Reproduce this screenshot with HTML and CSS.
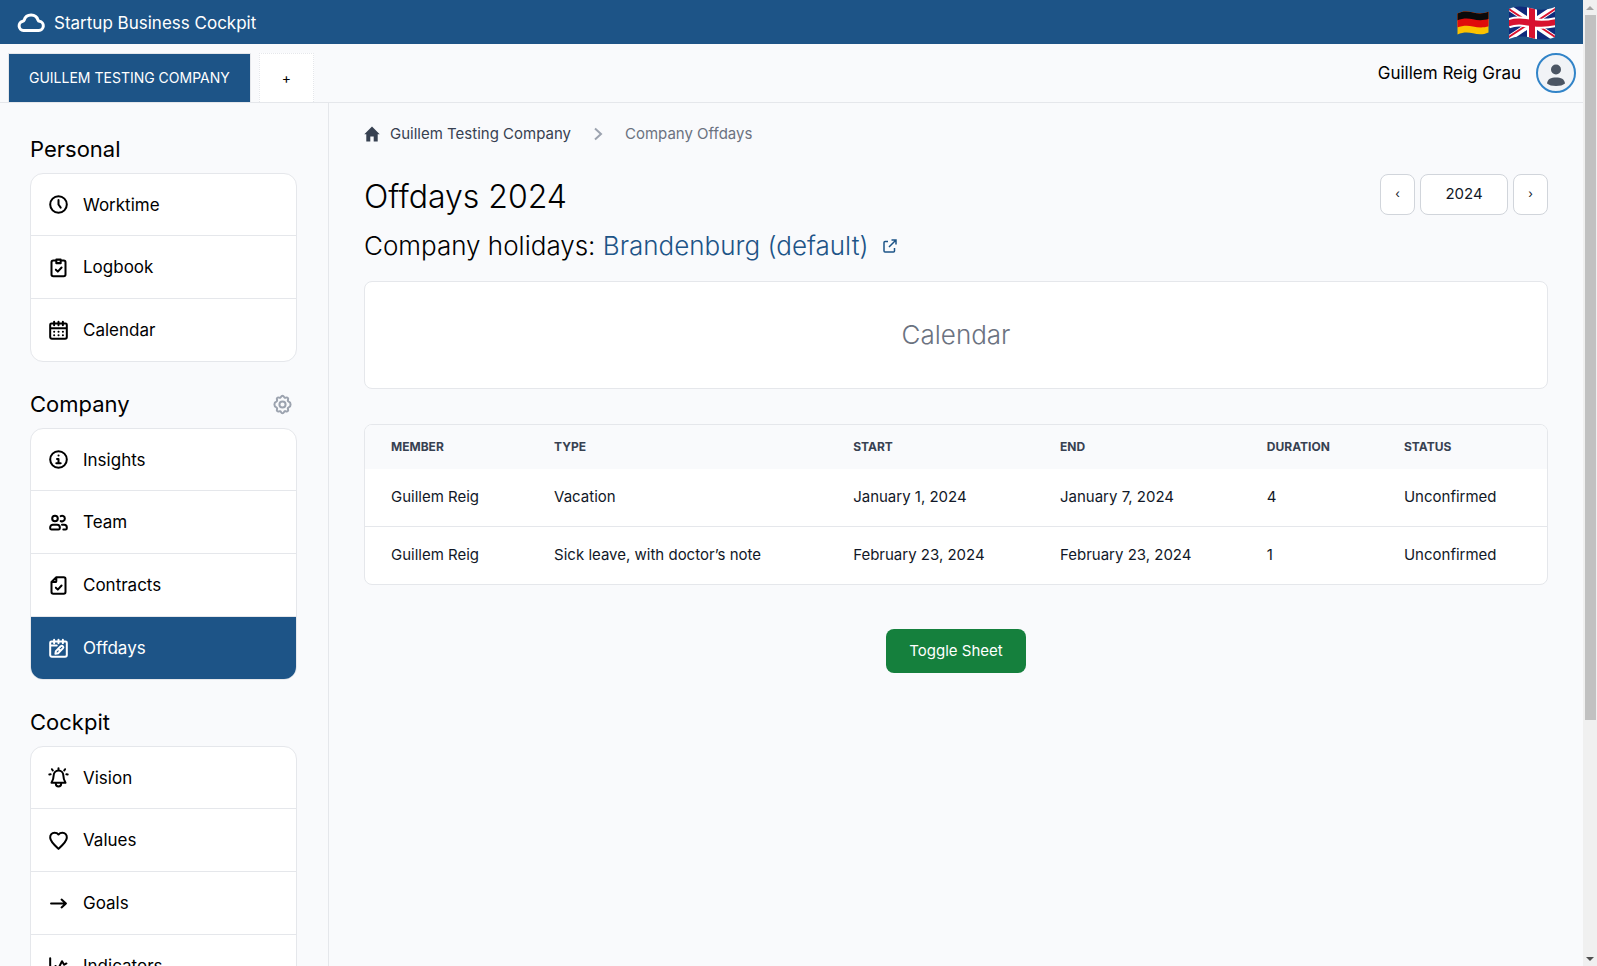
FILE: index.html
```html
<!DOCTYPE html>
<html lang="en">
<head>
<meta charset="utf-8">
<meta name="viewport" content="width=device-width, initial-scale=1">
<title>Startup Business Cockpit</title>
<link rel="stylesheet" href="styles.css">
</head>
<body>
<div class="app">
  <header class="topbar">
    <a class="brand" href="#">
      <svg class="brand-icon" viewBox="0 0 28 20" fill="none" stroke="currentColor" stroke-width="3" stroke-linejoin="round"><path d="M6.500 17.500h15.300a4.600 4.600 0 0 0 .6-9.150 1.500 1.500 0 0 1-1.300-1A7.300 7.300 0 0 0 7.100 7.200a1.500 1.500 0 0 1-1.200 1A4.700 4.700 0 0 0 6.500 17.500z"/></svg>
      <span>Startup Business Cockpit</span>
    </a>
    <div class="languages">
      <button class="flag" type="button" aria-label="Deutsch">
        <svg class="flag-de" viewBox="0 0 32 24">
          <defs><clipPath id="wave-de"><path d="M0.500 2.500C6-.5 11 .2 16 1.500S26 3 31.500.8V21.500C26 24 21 23.500 16 22.300S6 21 .5 23.500z"/></clipPath></defs>
          <g clip-path="url(#wave-de)"><path fill="#fcc200" d="M0 0h32v24H0z"/><path fill="#e00b0b" d="M0 0h32v15.200C26 17 21 16.500 16 15.400S6 14.200 0 16.500z"/><path fill="#0a0a0a" d="M0 0h32v7.800C26 9.800 21 9.500 16 8.300S6 7 0 9.500z"/></g>
        </svg>
      </button>
      <button class="flag" type="button" aria-label="English">
        <svg class="flag-uk" viewBox="0 0 48 34">
          <defs><clipPath id="wave-uk"><path d="M1 3C9-.8 16 .5 24 2.500S39 4 47 1V31c-8 3.500-15 3-23 1S9 29.500 1 33z"/></clipPath></defs>
          <g clip-path="url(#wave-uk)">
            <path fill="#0f2a7c" d="M0 0h48v34H0z"/>
            <path stroke="#fff" stroke-width="6" d="M0 1l48 32M0 33L48 1"/>
            <path stroke="#d8112f" stroke-width="2" d="M0 2.500l22 14.500M26 17l22 14.500M0 31.500L22 17M26 17L48 2.500"/>
            <path stroke="#fff" stroke-width="10" d="M24 0v34"/><path fill="none" stroke="#fff" stroke-width="10" d="M0 17.500c8-3 15-2 24-.5s16 1 24-1"/>
            <path stroke="#d8112f" stroke-width="6" d="M24 0v34"/><path fill="none" stroke="#d8112f" stroke-width="6" d="M0 17.500c8-3 15-2 24-.5s16 1 24-1"/>
          </g>
        </svg>
      </button>
    </div>
  </header>

  <div class="companybar">
    <nav class="tabs" aria-label="Companies">
      <a class="tab tab-active" href="#">GUILLEM TESTING COMPANY</a>
      <a class="tab tab-add" href="#" aria-label="Add company">+</a>
    </nav>
    <a class="user" href="#">
      <span>Guillem Reig Grau</span>
      <span class="avatar"><svg viewBox="0 0 20 24" fill="#4b5563"><circle cx="10" cy="6.500" r="5"/><path d="M1 20.500C1.500 16 5 14.500 10 14.500s8.500 1.500 9 6C17 22.200 14 23 10 23s-7-.8-9-2.500z"/></svg></span>
    </a>
  </div>

  <div class="layout">
    <aside class="sidebar">
      <section class="group">
        <h2 class="group-title">Personal</h2>
        <nav class="menu" aria-label="Personal">
          <a class="item" href="#"><svg class="icon" viewBox="0 0 24 24"><circle cx="12" cy="12" r="9.500"/><path d="M12 7v5l2.500 3.500"/></svg>Worktime</a>
          <a class="item" href="#"><svg class="icon" viewBox="0 0 24 24"><path d="M9 4H6a2 2 0 0 0-2 2v14a2 2 0 0 0 2 2h12a2 2 0 0 0 2-2V6a2 2 0 0 0-2-2h-3M9.500 3h5v4h-5zM9 14.500l2.200 2.200L15.500 12"/></svg>Logbook</a>
          <a class="item" href="#"><svg class="icon" viewBox="0 0 24 24"><path d="M4 4h16a1.500 1.500 0 0 1 1.500 1.500v14A2 2 0 0 1 19.500 21.500h-15a2 2 0 0 1-2-2v-14A1.500 1.500 0 0 1 4 4zM2.500 9.500h19M7 2v4M12 2v4M17 2v4M7 13.500h.1M12 13.500h.1M17 13.500h.1M7 17.500h.1M12 17.500h.1M17 17.500h.1"/></svg>Calendar</a>
        </nav>
      </section>
      <section class="group">
        <div class="group-head">
          <h2 class="group-title">Company</h2>
          <a class="settings" href="#" aria-label="Company settings"><svg class="icon" viewBox="0 0 24 24"><circle cx="12" cy="12" r="3.500"/><path d="M10.300 3.300c.8-1.700 2.600-1.700 3.400 0 .4.900 1.300 1.300 2.200.9 1.800-.7 3.100.6 2.400 2.400-.4.900 0 1.800.9 2.200 2.700.8 2.700 5.600 0 6.400-.9.400-1.300 1.300-.9 2.200.7 1.800-.6 3.100-2.400 2.400-.9-.4-1.800 0-2.200.9-.8 1.700-2.600 1.700-3.400 0-.4-.9-1.300-1.300-2.200-.9-1.800.7-3.100-.6-2.400-2.400.4-.9 0-1.800-.9-2.200-2.700-.8-2.700-5.600 0-6.400.9-.4 1.300-1.300.9-2.200-.7-1.800.6-3.100 2.400-2.400.9.400 1.800 0 2.200-.9z"/></svg></a>
        </div>
        <nav class="menu" aria-label="Company">
          <a class="item" href="#"><svg class="icon" viewBox="0 0 24 24"><circle cx="12" cy="12" r="9.500"/><path d="M12 7.500h.1M10.300 11.500H12V16M9.500 16.300h5"/></svg>Insights</a>
          <a class="item" href="#"><svg class="icon" viewBox="0 0 24 24"><circle cx="8" cy="7.500" r="3.200"/><path d="M14.500 4.700a3.200 3.200 0 1 1 0 5.600M5.500 14.500h5a3 3 0 0 1 3 3v1a1.500 1.500 0 0 1-1.500 1.500H4a1.500 1.500 0 0 1-1.500-1.500v-1a3 3 0 0 1 3-3zM16 14.500h2.500a3 3 0 0 1 3 3v1A1.500 1.500 0 0 1 20 20h-2.500"/></svg>Team</a>
          <a class="item" href="#"><svg class="icon" viewBox="0 0 24 24"><path d="M9.500 2.500H18a2 2 0 0 1 2 2v15a2 2 0 0 1-2 2H6a2 2 0 0 1-2-2V8zM9.500 2.500V7a1 1 0 0 1-1 1H4M9 14.500l2.200 2.200L15.500 12"/></svg>Contracts</a>
          <a class="item item-active" href="#"><svg class="icon" viewBox="0 0 24 24"><path d="M4 4h16a1.500 1.500 0 0 1 1.500 1.500v14A2 2 0 0 1 19.500 21.500h-15a2 2 0 0 1-2-2v-14A1.500 1.500 0 0 1 4 4zM2.500 8.500H10M7 2v4M12 2v4M17 2v4M8.500 18l.5-3 5.500-5.500a1.600 1.600 0 0 1 2.500 2.300L11.500 17.500zM12 12.500l2 2"/></svg>Offdays</a>
        </nav>
      </section>
      <section class="group">
        <h2 class="group-title">Cockpit</h2>
        <nav class="menu" aria-label="Cockpit">
          <a class="item" href="#"><svg class="icon" viewBox="0 0 24 24"><path d="M12 4a5.500 5.500 0 0 1 5.500 5.500c0 3.500.8 5.500 2.500 8.500H4c1.700-3 2.500-5 2.500-8.500A5.500 5.500 0 0 1 12 4zM12 1.500V4M9 19.500a3 2.800 0 0 0 6 0M4.500 2.500l1 1.500M19.500 2.500l-1 1.500M1.500 8.500l1.500-.2M22.500 8.500l-1.500-.2"/></svg>Vision</a>
          <a class="item" href="#"><svg class="icon" viewBox="0 0 24 24"><path d="M12 21.500c-1.500-1.500-9-7.500-9.500-12.500C2.200 5.500 4.500 3.200 7.500 3.200c2 0 3.700 1 4.500 2 .8-1 2.500-2 4.500-2 3 0 5.300 2.300 5 5.800C21 14 13.500 20 12 21.500z"/></svg>Values</a>
          <a class="item" href="#"><svg class="icon" viewBox="0 0 24 24"><path d="M3.500 12h17M15.500 7.500L20.500 12l-5 4.500"/></svg>Goals</a>
          <a class="item" href="#"><svg class="icon" viewBox="0 0 24 24"><path d="M2.500 2.500v17a2 2 0 0 0 2 2h17M7.500 17l1-5.500 3.500 2.500 4-8 2.500 4 2.500-1.500"/></svg>Indicators</a>
        </nav>
      </section>
    </aside>

    <main class="main">
      <nav class="crumbs" aria-label="Breadcrumb">
        <a class="crumb-home" href="#"><svg viewBox="0 0 16 16" fill="currentColor"><path d="M8 .5L.3 8.300h2V15.500h4V10.500h3.400v5h4V8.300h2z"/></svg>Guillem Testing Company</a>
        <svg class="crumb-arrow" viewBox="0 0 10 14"><path d="M2 1.500L8 7l-6 5.500"/></svg>
        <span class="crumb-current">Company Offdays</span>
      </nav>

      <div class="page-head">
        <h1 class="page-title">Offdays 2024</h1>
        <div class="pager">
          <button class="pager-button" type="button" aria-label="Previous year">‹</button>
          <button class="pager-button pager-year" type="button">2024</button>
          <button class="pager-button" type="button" aria-label="Next year">›</button>
        </div>
      </div>
      <p class="holidays">Company holidays: <a class="holidays-link" href="#">Brandenburg (default)<svg viewBox="0 0 14 14"><path d="M5 2.500H2A1 1 0 0 0 1 3.500V12a1 1 0 0 0 1 1h8.500a1 1 0 0 0 1-1V9M8.500 1H13v4.500M13 1L6 8"/></svg></a></p>

      <section class="calendar">Calendar</section>

      <div class="table-card">
        <table class="table">
          <colgroup><col class="col-member"><col class="col-type"><col class="col-date"><col class="col-date"><col class="col-duration"><col></colgroup>
          <thead><tr><th>MEMBER</th><th>TYPE</th><th>START</th><th>END</th><th>DURATION</th><th>STATUS</th></tr></thead>
          <tbody>
            <tr><td>Guillem Reig</td><td>Vacation</td><td>January 1, 2024</td><td>January 7, 2024</td><td>4</td><td>Unconfirmed</td></tr>
            <tr><td>Guillem Reig</td><td>Sick leave, with doctor’s note</td><td>February 23, 2024</td><td>February 23, 2024</td><td>1</td><td>Unconfirmed</td></tr>
          </tbody>
        </table>
      </div>

      <button class="toggle" type="button">Toggle Sheet</button>
    </main>
  </div>
</div>
<div class="scrollbar" aria-hidden="true">
  <span class="arrow arrow-up"></span>
  <span class="track"><span class="thumb"></span></span>
  <span class="arrow arrow-down"></span>
</div>
</body>
</html>
```
FILE: styles.css
```css
* { box-sizing: border-box; }

:root {
  --blue: #1d5487;
  --line: #e5e7eb;
  --page: #f9fafc;
}

body {
  margin: 0;
  display: flex;
  height: 100vh;
  overflow: hidden;
  background: var(--page);
  color: #000;
  font-family: Inter, "Liberation Sans", sans-serif;
  font-size: 15px;
  line-height: 24px;
}

h1, h2, p { margin: 0; font-weight: 400; }
a { color: inherit; text-decoration: none; }
button { font: inherit; cursor: pointer; }
svg { display: block; flex: none; }

.app {
  flex: 1;
  min-width: 0;
  display: flex;
  flex-direction: column;
  overflow-y: auto;
  scrollbar-width: none;
}

/* Top bar */
.topbar {
  flex: none;
  display: flex;
  align-items: center;
  justify-content: space-between;
  height: 44px;
  padding: 1px 27px 0 17px;
  background: var(--blue);
  color: #fff;
}
.brand { display: flex; align-items: center; gap: 9px; font-size: 17px; }
.brand-icon { width: 28px; height: 20px; }
.languages { display: flex; align-items: center; gap: 19px; }
.flag { padding: 0; border: 0; background: none; }
.flag-de { width: 32px; height: 24px; }
.flag-uk { width: 48px; height: 34px; }

/* Company tabs */
.companybar {
  flex: none;
  display: flex;
  justify-content: space-between;
  padding: 9px 7px 0 8px;
  border-bottom: 1px solid var(--line);
}
.tabs { display: flex; gap: 8px; }
.tab {
  display: flex;
  align-items: center;
  height: 49px;
  padding: 0 20px;
  border: 1px solid var(--line);
  border-bottom: 0;
  font-size: 14px;
}
.tab-active { background: var(--blue); color: #fff; }
.tab-add { padding: 0 22px; border-style: dotted; background: #fff; }
.user { display: flex; align-items: center; align-self: flex-start; gap: 15px; font-size: 17px; }
.avatar {
  display: grid;
  place-items: center;
  width: 40px;
  height: 40px;
  border: 2px solid #3284c8;
  border-radius: 50%;
  background: #f1f3f6;
}
.avatar svg { width: 20px; height: 24px; margin-top: 4px; }

.layout { flex: 1 0 auto; display: flex; }

/* Sidebar */
.sidebar {
  flex: none;
  display: flex;
  flex-direction: column;
  gap: 27px;
  width: 329px;
  padding: 31px 31px 31px 30px;
  border-right: 1px solid var(--line);
}
.group { display: flex; flex-direction: column; gap: 9px; }
.group-head { display: flex; align-items: center; justify-content: space-between; padding-right: 4px; }
.group-title { font-size: 22px; line-height: 30px; }
.settings { color: #9ca3af; }
.menu {
  overflow: hidden;
  border: 1px solid var(--line);
  border-radius: 13px;
  background: #fff;
}
.item {
  display: flex;
  align-items: center;
  gap: 14px;
  height: 61px;
  padding-left: 17px;
  font-size: 17px;
}
.item + .item { height: 63px; border-top: 1px solid var(--line); }
.item-active { background: var(--blue); color: #fff; }
.icon {
  width: 21px;
  height: 21px;
  fill: none;
  stroke: currentColor;
  stroke-width: 2.3;
  stroke-linecap: round;
  stroke-linejoin: round;
}

/* Main column */
.main {
  flex: 1;
  min-width: 0;
  display: flex;
  flex-direction: column;
  padding: 19px 35px 35px;
}
.crumbs { display: flex; align-items: center; gap: 22px; }
.crumb-home { display: flex; align-items: center; gap: 10px; color: #374151; }
.crumb-home svg { width: 16px; height: 16px; }
.crumb-arrow { width: 10px; height: 14px; fill: none; stroke: #9ca3af; stroke-width: 2; }
.crumb-current { color: #6b7280; }

.page-head {
  display: flex;
  justify-content: space-between;
  align-items: flex-start;
  margin-top: 28px;
}
.page-title { font-size: 32px; font-weight: 300; line-height: 46px; }
.pager { display: flex; gap: 5px; }
.pager-button {
  width: 35px;
  height: 41px;
  padding: 0 0 2px;
  border: 1px solid #d1d5db;
  border-radius: 8px;
  background: #fff;
  color: #111827;
  font-size: 12px;
}
.pager-year { width: 88px; font-size: 15px; }

.holidays { margin-top: 8px; font-size: 26px; font-weight: 300; line-height: 36px; }
.holidays-link { display: inline-flex; align-items: center; gap: 15px; color: var(--blue); }
.holidays-link svg { width: 14px; height: 14px; fill: none; stroke: currentColor; stroke-width: 1.500; }

.calendar {
  margin-top: 17px;
  padding: 35px;
  border: 1px solid var(--line);
  border-radius: 8px;
  background: #fff;
  color: #6b7280;
  font-size: 26px;
  font-weight: 300;
  line-height: 36px;
  text-align: center;
}

.table-card {
  margin-top: 35px;
  overflow: hidden;
  border: 1px solid var(--line);
  border-radius: 8px;
  background: #fff;
}
.table { width: 100%; table-layout: fixed; border-collapse: collapse; text-align: left; color: #111827; }
.table th { padding: 10px 0 10px 26px; background: var(--page); color: #374151; font-size: 12px; font-weight: 700; }
.table td { padding: 16px 0 17px 26px; white-space: nowrap; }
.table tbody tr + tr td { border-top: 1px solid var(--line); }
.col-member { width: 13.8%; }
.col-type { width: 25.3%; }
.col-date { width: 17.500%; }
.col-duration { width: 11.6%; }

.toggle {
  align-self: center;
  margin-top: 44px;
  padding: 10px 23px;
  border: 0;
  border-radius: 8px;
  background: #15803d;
  color: #fff;
}

/* Page scrollbar */
.scrollbar {
  flex: none;
  display: flex;
  flex-direction: column;
  width: 14px;
  background: #f0f0f0;
}
.arrow { display: grid; place-items: center; height: 15px; }
.arrow::before { content: ""; border: 4px solid transparent; }
.arrow-up::before { border-top: 0; border-bottom-color: #a3a3a3; }
.arrow-down::before { border-bottom: 0; border-top-color: #505050; }
.track { flex: 1; padding: 0 1px 0 2px; }
.thumb { display: block; height: 75.3%; background: #c1c1c1; }
```
